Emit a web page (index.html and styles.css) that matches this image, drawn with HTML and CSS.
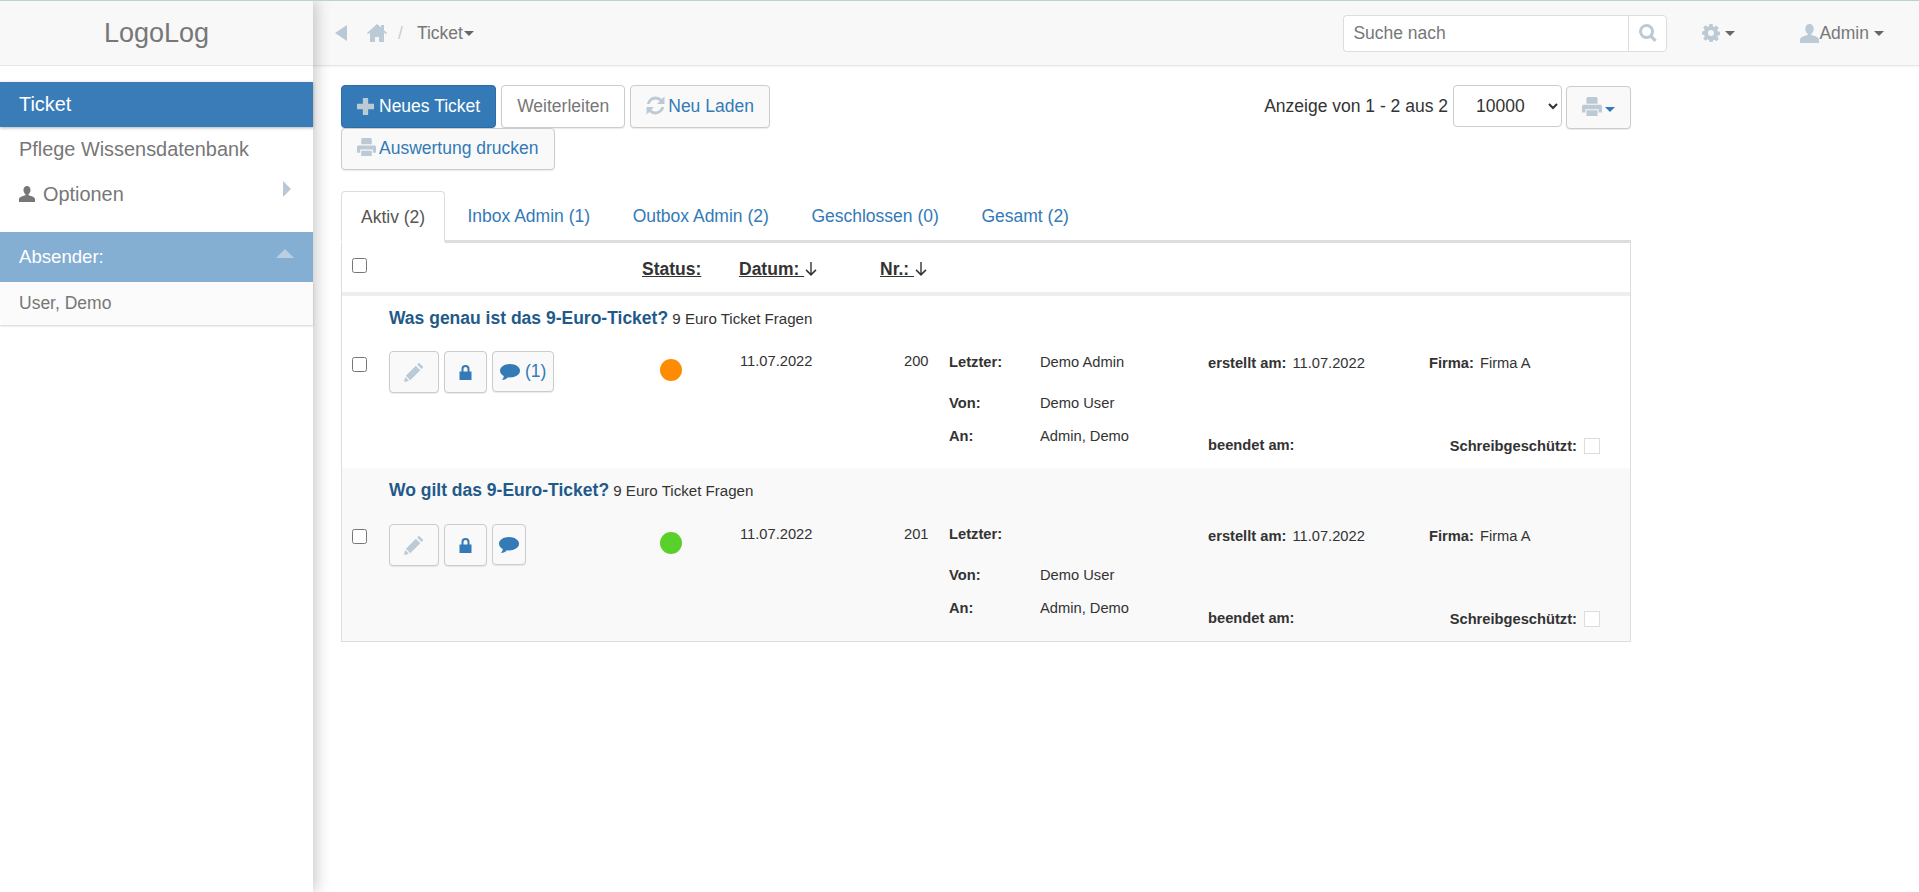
FILE: index.html
```html
<!DOCTYPE html>
<html lang="de">
<head>
    <meta charset="UTF-8">
    <title>Ticket</title>
    <link rel="stylesheet" href="styles.css">
</head>
<body>
    <svg class="sprite" xmlns="http://www.w3.org/2000/svg">
        <symbol id="i-home" viewBox="0 0 20 18"><path d="M10 0l4 3.600V1h3v5.300L20 9l-1 1.200-2-1.800V18h-5v-5H8v5H3V8.400l-2 1.800L0 9z"/></symbol>
        <symbol id="i-plus" viewBox="0 0 16 16"><path d="M5.500 0h5v5.500H16v5h-5.500V16h-5v-5.500H0v-5h5.500z"/></symbol>
        <symbol id="i-refresh" viewBox="0 0 18 18"><path d="M9 0.500a8.500 8.500 0 0 1 5.900 2.400L17.500 0.500v7h-7l2.500-2.500A5.700 5.700 0 0 0 3.500 7.500H0.800A8.500 8.500 0 0 1 9 0.500zM0.500 10.500h7L5 13a5.700 5.700 0 0 0 9.500-2.500h2.700A8.500 8.500 0 0 1 3.100 15.100L0.500 17.500z"/></symbol>
        <symbol id="i-print" viewBox="0 0 18 18"><path d="M5 0h8l1 1v5H4V1zM1 7h16l1 1v6h-3v-3H3v3H0V8zM4 12h10v5H4z"/></symbol>
        <symbol id="i-pencil" viewBox="1 1 16 16"><path d="M13 1.500l3.500 3.500-1.500 1.500L11.500 3zM10.500 4L14 7.500 6 15.500 2.500 12zM2 13l3 3-3.200 1-.8-.8z"/></symbol>
        <symbol id="i-lock" viewBox="1 0 12 15"><path d="M3 6.500V4a4 4 0 0 1 8 0v2.500h2V15H1V6.500zm2 0h4V4a2 2 0 0 0-4 0z"/></symbol>
        <symbol id="i-comment" viewBox="0 0 20 18"><path d="M10 1c5.500 0 10 2.900 10 6.700s-4.500 6.700-10 6.700c-.8 0-1.500-.1-2.200-.2C6.500 16 4.500 17 2 17c1-1.100 1.700-2.500 1.800-4C1.500 11.800 0 9.900 0 7.700 0 3.900 4.500 1 10 1z"/></symbol>
        <symbol id="i-user" viewBox="0 0 18 18"><path d="M9 0c2.500 0 4 2 4 4.500 0 2-1 4-2.300 4.800v1.200C14 11.500 18 12.500 18 15v3H0v-3c0-2.500 4-3.500 7.300-4.500V9.300C6 8.500 5 6.500 5 4.500 5 2 6.500 0 9 0z"/></symbol>
        <symbol id="i-cog" viewBox="0 0 18 18"><path fill-rule="evenodd" d="M7.400 0h3.200l.4 2.500 1.500.6 2-1.500 2.300 2.300-1.500 2 .6 1.500 2.100.4v3.200l-2.100.4-.6 1.500 1.500 2-2.300 2.300-2-1.500-1.500.6-.4 2.100H7.400L7 15.900l-1.500-.6-2 1.500-2.300-2.300 1.500-2-.6-1.500L0 10.600V7.400l2.100-.4.600-1.500-1.500-2 2.300-2.300 2 1.500L7 2.500zM9 6a3 3 0 1 0 0 6 3 3 0 0 0 0-6z"/></symbol>
        <symbol id="i-search" viewBox="0 0 18 18"><path fill-rule="evenodd" d="M7.500 0a7.500 7.500 0 0 1 6.200 11.700l4 4-2.200 2.200-4-4A7.500 7.500 0 1 1 7.500 0zm0 3a4.500 4.500 0 1 0 0 9 4.500 4.500 0 0 0 0-9z"/></symbol>
        <symbol id="i-down" viewBox="0 0 12 12"><path d="M5.400 0h1.200v9.500l3.200-3.200.9.900L6 11.900 1.300 7.200l.9-.9 3.200 3.200z"/></symbol>
    </svg>

    <aside class="sidebar">
        <div class="brand">LogoLog</div>
        <nav class="side-nav">
            <a class="side-item active">Ticket</a>
            <a class="side-item">Pflege Wissensdatenbank</a>
            <a class="side-item">
                <svg class="icon user-icon"><use href="#i-user"/></svg>Optionen
                <span class="tri tri-right"></span>
            </a>
        </nav>
        <div class="filter-head">Absender: <span class="tri tri-up"></span></div>
        <div class="filter-item">User, Demo</div>
    </aside>

    <div class="main">
        <header class="topbar">
            <span class="tri tri-left"></span>
            <svg class="icon home-icon"><use href="#i-home"/></svg>
            <span class="crumb-sep">/</span>
            <span class="crumb">Ticket<span class="caret"></span></span>
            <div class="search">
                <input type="text" placeholder="Suche nach">
                <span class="search-btn"><svg class="icon"><use href="#i-search"/></svg></span>
            </div>
            <span class="top-menu gear"><svg class="icon"><use href="#i-cog"/></svg><span class="caret"></span></span>
            <span class="top-menu admin"><svg class="icon"><use href="#i-user"/></svg>Admin<span class="caret"></span></span>
        </header>

        <div class="content">
            <div class="toolbar">
                <div class="toolbar-left">
                    <button class="btn btn-primary"><svg class="icon plus-icon"><use href="#i-plus"/></svg>Neues Ticket</button>
                    <button class="btn btn-muted">Weiterleiten</button>
                    <button class="btn btn-link"><svg class="icon"><use href="#i-refresh"/></svg>Neu Laden</button>
                    <button class="btn btn-link"><svg class="icon"><use href="#i-print"/></svg>Auswertung drucken</button>
                </div>
                <div class="toolbar-right">
                    <span>Anzeige von 1 - 2 aus 2</span>
                    <select class="page-size"><option>10000</option></select>
                    <button class="btn btn-link btn-print"><svg class="icon"><use href="#i-print"/></svg><span class="caret"></span></button>
                </div>
            </div>

            <ul class="tabs">
                <li class="tab active">Aktiv (2)</li>
                <li class="tab">Inbox Admin (1)</li>
                <li class="tab">Outbox Admin (2)</li>
                <li class="tab">Geschlossen (0)</li>
                <li class="tab">Gesamt (2)</li>
            </ul>

            <div class="ticket-table">
                <div class="table-head">
                    <input type="checkbox" class="check">
                    <span class="sort sort-status">Status:</span>
                    <span class="sort sort-date">Datum: <svg class="icon"><use href="#i-down"/></svg></span>
                    <span class="sort sort-nr">Nr.: <svg class="icon"><use href="#i-down"/></svg></span>
                </div>

                <div class="ticket">
                    <div class="ticket-title"><strong>Was genau ist das 9-Euro-Ticket?</strong> 9 Euro Ticket Fragen</div>
                    <div class="ticket-body">
                        <input type="checkbox" class="check">
                        <div class="actions">
                            <button class="act act-edit"><svg class="icon"><use href="#i-pencil"/></svg></button>
                            <button class="act act-lock"><svg class="icon"><use href="#i-lock"/></svg></button>
                            <button class="act act-comment"><svg class="icon"><use href="#i-comment"/></svg> (1)</button>
                        </div>
                        <div class="status"><span class="dot orange"></span></div>
                        <div class="date">11.07.2022</div>
                        <div class="nr">200</div>
                        <dl class="people">
                            <dt>Letzter:</dt><dd>Demo Admin</dd>
                            <dt>Von:</dt><dd>Demo User</dd>
                            <dt>An:</dt><dd>Admin, Demo</dd>
                        </dl>
                        <div class="meta">
                            <div class="meta-row"><span><b>erstellt am:</b> 11.07.2022</span><span><b>Firma:</b> Firma A</span></div>
                            <div class="meta-row"><b>beendet am:</b><span class="readonly"><b>Schreibgeschützt:</b><span class="box"></span></span></div>
                        </div>
                    </div>
                </div>

                <div class="ticket odd">
                    <div class="ticket-title"><strong>Wo gilt das 9-Euro-Ticket?</strong> 9 Euro Ticket Fragen</div>
                    <div class="ticket-body">
                        <input type="checkbox" class="check">
                        <div class="actions">
                            <button class="act act-edit"><svg class="icon"><use href="#i-pencil"/></svg></button>
                            <button class="act act-lock"><svg class="icon"><use href="#i-lock"/></svg></button>
                            <button class="act act-comment"><svg class="icon"><use href="#i-comment"/></svg></button>
                        </div>
                        <div class="status"><span class="dot green"></span></div>
                        <div class="date">11.07.2022</div>
                        <div class="nr">201</div>
                        <dl class="people">
                            <dt>Letzter:</dt><dd></dd>
                            <dt>Von:</dt><dd>Demo User</dd>
                            <dt>An:</dt><dd>Admin, Demo</dd>
                        </dl>
                        <div class="meta">
                            <div class="meta-row"><span><b>erstellt am:</b> 11.07.2022</span><span><b>Firma:</b> Firma A</span></div>
                            <div class="meta-row"><b>beendet am:</b><span class="readonly"><b>Schreibgeschützt:</b><span class="box"></span></span></div>
                        </div>
                    </div>
                </div>
            </div>
        </div>
    </div>
</body>
</html>
```

FILE: styles.css
```css
* { box-sizing: border-box; }
html, body { height: 100%; }
body {
    margin: 0;
    display: flex;
    height: 892px;
    overflow: hidden;
    font-family: "Liberation Sans", Arial, sans-serif;
    font-size: 14.7px;
    color: #333;
    background: #fff;
    border-top: 1px solid #b9d3d3;
}
.sprite { display: none; }
.icon { width: 1em; height: 1em; fill: #bccad6; flex: none; }

/* triangles and carets */
.tri { display: inline-block; width: 0; height: 0; border-style: solid; border-color: transparent; }
.tri-left { border-width: 8px 12px 8px 0; border-right-color: #b9c8d4; margin: 0 20px 0 22px; }
.tri-right { border-width: 8px 0 8px 8px; border-left-color: #b9c8d4; position: absolute; right: 22px; top: 9px; }
.tri-up { border-width: 0 9px 9px 9px; border-bottom-color: #b9cfe3; position: absolute; right: 19px; top: 17px; }
.caret {
    display: inline-block;
    width: 0;
    height: 0;
    margin-left: 2px;
    vertical-align: middle;
    border-top: 5px solid #666;
    border-left: 5px solid transparent;
    border-right: 5px solid transparent;
}

/* sidebar */
.sidebar {
    width: 313px;
    flex: none;
    background: #fff;
    box-shadow: 3px 0 14px rgba(0, 0, 0, 0.22);
    position: relative;
    z-index: 2;
}
.brand {
    height: 65px;
    background: #f8f8f8;
    border-bottom: 1px solid #e7e7e7;
    text-align: center;
    font-size: 27px;
    line-height: 64px;
    color: #777;
}
.side-nav { padding-top: 16px; }
.side-item {
    display: block;
    position: relative;
    height: 45px;
    padding: 0 19px;
    font-size: 19.9px;
    line-height: 45px;
    color: #777;
}
.side-item.active { background: #397cb8; color: #fff; box-shadow: 0 1px 3px rgba(0, 0, 0, 0.3); }
.user-icon { fill: #777; font-size: 16px; margin-right: 8px; vertical-align: -1px; }
.filter-head {
    position: relative;
    height: 50px;
    margin-top: 15px;
    padding: 0 19px;
    background: #85aed3;
    color: #fff;
    font-size: 18.6px;
    line-height: 50px;
}
.filter-item {
    height: 43px;
    padding: 0 19px;
    background: #fbfbfb;
    color: #777;
    font-size: 17.5px;
    line-height: 43px;
    box-shadow: 0 1px 2px rgba(0, 0, 0, 0.18);
}

/* top bar */
.main { flex: 1; min-width: 0; }
.topbar {
    height: 65px;
    display: flex;
    align-items: center;
    background: #f8f8f8;
    border-bottom: 1px solid #e7e7e7;
    box-shadow: 0 1px 2px rgba(0, 0, 0, 0.05);
    font-size: 17.5px;
    color: #777;
}
.home-icon { font-size: 20px; }
.crumb-sep { margin: 0 14px 0 11px; color: #ccc; }
.crumb .caret { margin-left: 1px; }
.search { display: flex; margin-left: auto; height: 37px; width: 324px; }
.search input {
    flex: 1;
    min-width: 0;
    padding: 0 9px;
    border: 1px solid #ddd;
    border-right: none;
    border-radius: 4px 0 0 4px;
    font: inherit;
    background: #fff;
}
.search input::placeholder { color: #777; opacity: 1; }
.search-btn {
    width: 39px;
    display: flex;
    align-items: center;
    justify-content: center;
    border: 1px solid #ddd;
    border-radius: 0 4px 4px 0;
    background: #fff;
    font-size: 18px;
}
.top-menu { display: flex; align-items: center; }
.gear { margin-left: 35px; font-size: 18px; }
.gear .caret { margin-left: 5px; }
.admin { margin-left: 65px; margin-right: 35px; }
.admin .icon { font-size: 19px; }
.admin .caret { margin-left: 5px; }

/* content */
.content { width: 1318px; padding: 19px 0 0 28px; }
.toolbar { display: flex; justify-content: space-between; }
.toolbar-left { width: 450px; display: flex; flex-wrap: wrap; column-gap: 5px; }
.toolbar-right { display: flex; align-items: flex-start; gap: 5px; line-height: 42px; font-size: 17.5px; }
.btn {
    height: 42.5px;
    padding: 0 15px;
    border: 1px solid #ccc;
    border-radius: 4px;
    font: inherit;
    font-size: 17.5px;
    background: #fff;
    white-space: nowrap;
    box-shadow: 0 1px 1px rgba(0, 0, 0, 0.08);
}
.btn .icon { font-size: 19px; margin-right: 3px; vertical-align: -3px; }
.btn .plus-icon { font-size: 17px; margin-right: 5px; }
.btn-primary { background: #337ab7; border-color: #2e6da4; color: #fff; }
.btn-muted { color: #777; }
.btn-link { color: #337ab7; background: #f9f9f9; padding: 0 15.5px 0 15px; }
.page-size {
    width: 109px;
    height: 42px;
    padding-left: 18px;
    border: 1px solid #ccc;
    border-radius: 4px;
    background: #fff;
    font: inherit;
    color: #333;
}
.btn-print { width: 65px; padding: 0; margin-top: 1px; margin-left: -1px; }
.btn-print .icon { font-size: 20px; margin-right: 0; }
.btn-print .caret { border-top-color: #337ab7; margin-left: 3px; }

/* tabs */
.tabs {
    display: flex;
    gap: 2px;
    height: 52px;
    margin: 21px 0 0;
    padding: 0;
    list-style: none;
    font-size: 17.5px;
    color: #337ab7;
    border-bottom: 3px solid #ddd;
}
.tab { height: 52px; padding: 0 20.3px; line-height: 50px; }
.tab.active {
    padding: 0 19px;
    color: #555;
    background: #fff;
    border: 1px solid #ddd;
    border-bottom: 3px solid #fff;
    border-radius: 4px 4px 0 0;
}

/* ticket list */
.ticket-table { border: 1px solid #ddd; border-top: none; }
.check { width: 15px; height: 15px; margin: 0; }
.table-head {
    position: relative;
    height: 53px;
    border-bottom: 4px solid #eee;
    padding: 15px 0 0 10px;
}
.sort { position: absolute; top: 16px; font-size: 17.5px; font-weight: bold; text-decoration: underline; }
.sort .icon { fill: #333; font-size: 14px; vertical-align: -1px; }
.sort-status { left: 300px; }
.sort-date { left: 397px; }
.sort-nr { left: 538px; }
.ticket { height: 172px; padding: 12px 0 0 10px; }
.ticket.odd { background: #f9f9f9; height: 173px; }
.ticket-title { padding-left: 37px; height: 43px; line-height: 20px; font-size: 15.1px; }
.odd .ticket-title { height: 44px; }
.ticket-title strong { font-size: 17.5px; color: #1f5a8a; }
.ticket-body { display: flex; align-items: flex-start; }
.ticket-body .check { margin-top: 6px; }
.odd .ticket-body .check { margin-top: 5px; }
.actions { display: flex; margin-left: 22px; width: 252px; gap: 5px; align-items: flex-start; }
.act {
    height: 42px;
    padding: 0;
    border: 1px solid #ccc;
    border-radius: 4px;
    background: #f9f9f9;
    font: inherit;
    font-size: 17.5px;
    color: #337ab7;
    display: flex;
    align-items: center;
    justify-content: center;
    gap: 5px;
    box-shadow: 0 1px 1px rgba(0, 0, 0, 0.08);
}
.act-edit { width: 50px; }
.act-edit .icon { font-size: 20px; }
.act-lock { width: 43px; }
.act-lock .icon { fill: #337ab7; font-size: 15px; }
.act-comment { padding: 0 7px; height: 41px; min-width: 34px; }
.odd .act-comment { padding: 0 6px; }
.act-comment .icon { fill: #337ab7; font-size: 20px; }
.status { width: 81px; padding-top: 8px; }
.dot { display: block; width: 22px; height: 22px; border-radius: 50%; margin-left: 19px; }
.dot.orange { background: #ff8c00; }
.dot.green { background: #59d02b; }
.date { width: 164px; margin-left: 18px; padding-top: 2px; }
.nr { width: 45px; padding-top: 2px; }
.people {
    display: grid;
    grid-template-columns: 91px 168px;
    grid-auto-rows: 41px;
    margin: 3px 0 0;
}
.odd .people { margin-top: 2px; }
.people dt { font-weight: bold; }
.people dd { margin: 0; }
.people dt:nth-of-type(3), .people dd:nth-of-type(3) { margin-top: -8px; }
.meta { width: 392px; padding-top: 4px; }
.meta-row { display: flex; height: 82px; }
.meta-row > :first-child { width: 221px; }
.meta-row b { margin-right: 2px; }
.readonly { display: flex; align-items: center; gap: 5px; margin-left: 21px; height: 18px; }
.box { width: 16px; height: 16px; border: 1px solid #ddd; background: #fff; }
```
